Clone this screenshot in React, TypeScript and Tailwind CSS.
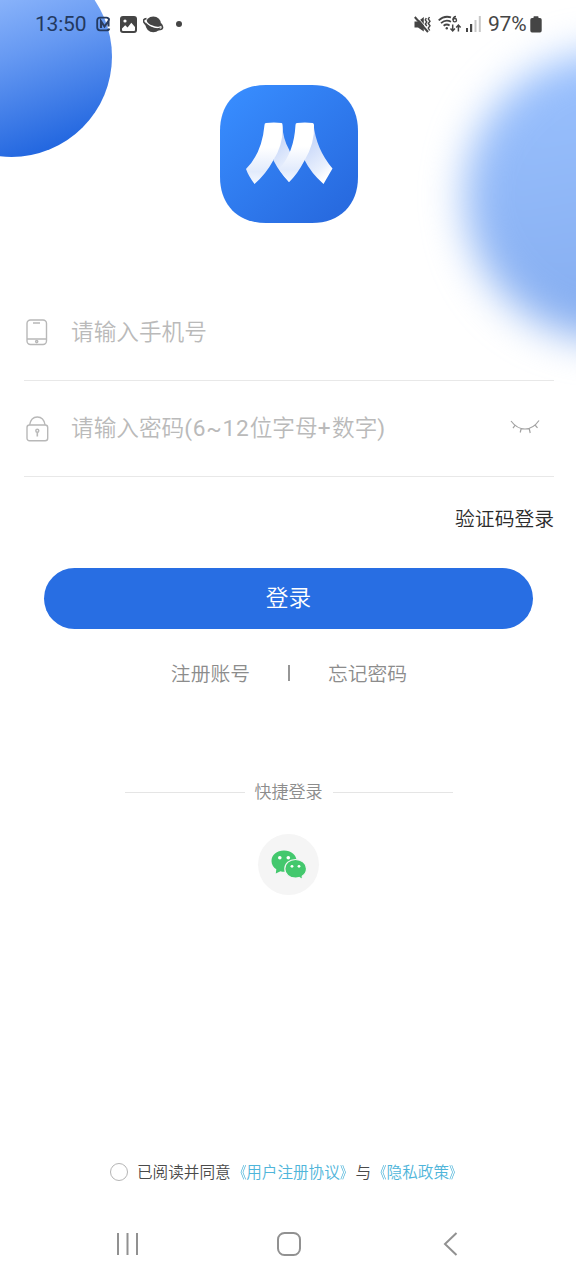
import { ReactNode, useState } from 'react';

const StatusBar = () => (
  <header className="relative flex h-12 items-center justify-between pl-[35px] pr-[34px] text-[#454545]">
    <div className="flex items-center">
      <span className="w-[52px] whitespace-nowrap text-[21px] leading-6 tracking-[-0.2px] text-[#23395f]">13:50</span>
      {/* Notification icons */}
      <svg className="ml-[9px]" width="15" height="16" viewBox="0 0 15 16" fill="none">
        <path d="M13 4.500Q13 1.700 10.500 1.700H4Q1.200 1.700 1.200 4.400V11.600Q1.200 14.300 4 14.300H10.500Q13 14.300 13.300 12.500" stroke="#23395f" strokeWidth="1.8" />
        <path d="M5 12V5.200L8.500 10.500L12.500 5V10.500" stroke="#2a3c5f" strokeWidth="2.1" />
      </svg>
      <svg className="ml-[9px]" width="17" height="17" viewBox="0 0 17 17">
        <rect width="17" height="17" rx="3" fill="currentColor" />
        <circle cx="5" cy="5" r="1.6" fill="#fff" />
        <path d="M2 12.6L5.2 9.2L7.6 11.5L11.3 6.7L15 11V14Q15 15 14 15H3Q2 15 2 14Z" fill="#fff" />
      </svg>
      <svg className="ml-[6px]" width="21" height="17" viewBox="0 0 21 17">
        <circle cx="10.300" cy="8.300" r="7.900" fill="currentColor" />
        <path d="M3.200 4.300Q2.500 7 8 9.800Q14.500 12.800 17.800 10.500" fill="none" stroke="#fff" strokeWidth="1.500" />
        <path d="M3.500 2.700Q-.5 3 .9 6.200Q2.800 9.600 8.500 12.200Q15.500 14.600 18.800 12.900Q20.600 11.200 17.800 7.900" fill="none" stroke="currentColor" strokeWidth="1.700" />
      </svg>
      <span className="ml-[12px] size-[6px] rounded-full bg-[#454545]" />
    </div>

    <div className="flex items-center">
      <svg width="17" height="17" viewBox="0 0 17 17">
        <path d="M0.500 5.500H4L9.800 1V15.500L4 11.500H0.500Z" fill="currentColor" />
        <path d="M2.300 0L15 14.500" stroke="#fff" strokeWidth="1" />
        <path d="M.8 1L14 16" stroke="currentColor" strokeWidth="2" />
        <path d="M12.300 2L11.300 4L12.800 6L11.300 8L12.800 10M15.500 1L14.300 3L16 5.200L14.300 7.500L16 9.800L14.300 12L15.700 14.500" stroke="currentColor" strokeWidth="1.4" fill="none" />
      </svg>
      <svg className="ml-[7px]" width="24" height="18" viewBox="0 0 24 18" fill="none" stroke="currentColor" strokeWidth="1.8">
        <path d="M.7 5.400Q6.200 .2 13 2.400M3 8.200Q7.700 4 13 6.800M5.600 10.800Q8.600 8.400 11.600 10.500" />
        <circle cx="8.800" cy="13.200" r="1.200" fill="currentColor" stroke="none" />
        <path d="M18 1.400Q15 1.600 15 5" strokeWidth="1.5" />
        <circle cx="16.800" cy="5.200" r="1.700" strokeWidth="1.400" />
        <path d="M14.700 9.500V16M12.500 13.600L14.700 16L16.900 13.600M20.400 16.500V10M18.200 12.400L20.400 10L22.600 12.400" strokeWidth="1.5" />
      </svg>
      <svg className="ml-[4px]" width="16" height="17" viewBox="0 0 16 17" fill="currentColor">
        <rect x="0" y="12" width="2" height="4" />
        <rect x="4" y="8" width="2.200" height="8" />
        <rect x="8.500" y="4" width="2" height="12" opacity=".3" />
        <rect x="12.800" y="0" width="2" height="16" opacity=".3" />
      </svg>
      <span className="ml-[6px] w-[41px] whitespace-nowrap text-[21px] leading-6 tracking-[-0.2px]">97%</span>
      <svg className="ml-[1px]" width="12" height="17" viewBox="0 0 12 17" fill="currentColor">
        <path d="M3.500 2V1Q3.500 .3 4.200 .3H7.800Q8.500 .3 8.500 1V2H10Q11.700 2 11.700 3.700V14.600Q11.700 16.500 10 16.500H2Q.3 16.500 .3 14.600V3.700Q.3 2 2 2Z" />
      </svg>
    </div>
  </header>
);

const Logo = () => (
  <svg width="138" height="138" viewBox="0 0 138 138">
    <defs>
      <linearGradient id="logoBg" x1="0.1" y1="0.1" x2="0.85" y2="0.9">
        <stop offset="0" stopColor="#378bfd" />
        <stop offset="1" stopColor="#286be0" />
      </linearGradient>
      <linearGradient id="fold" x1="0.1" y1="0" x2="0.5" y2="1">
        <stop offset="0.2" stopColor="#c3d4f8" />
        <stop offset="0.8" stopColor="#e9f0fd" />
        <stop offset="1" stopColor="#ffffff" />
      </linearGradient>
      <linearGradient id="ribbon" x1="0" y1="0" x2="0" y2="1">
        <stop offset="0.4" stopColor="#ffffff" />
        <stop offset="0.8" stopColor="#e2ebfc" />
        <stop offset="1" stopColor="#f4f8ff" />
      </linearGradient>
    </defs>
    <path d="M0 46C0 18 18 0 46 0H92C120 0 138 18 138 46V92C138 120 120 138 92 138H46C18 138 0 120 0 92Z" fill="url(#logoBg)" />
    <path d="M62 39Q63 54 69 64.500L76 82Q75 91 69 97Q60 88 53.500 75.500L56 64Z" fill="url(#fold)" />
    <path d="M93.500 39Q96 64 112.500 83.500L103.500 99Q91 88 84.500 75L87 62Z" fill="url(#fold)" />
    <path d="M46 38Q54 37 61.500 38Q62.500 38.200 62.500 40Q64 58 53.500 75Q46 89 34.500 99Q28.500 91 26 84Q42 68 44.500 40Q44.500 38.200 46 38Z" fill="url(#ribbon)" />
    <path d="M77 38Q85 37 92.500 38Q93.800 38.200 94 40Q95 58 84.500 75.500Q77 90 69 97Q63 90 59 84Q74 68 75.500 40Q75.500 38.200 77 38Z" fill="url(#ribbon)" />
  </svg>
);

const PhoneIcon = () => (
  <svg width="22" height="27" viewBox="0 0 22 27" fill="none" stroke="#b8b8b8" strokeWidth="1.4">
    <rect x="1" y="1" width="19.500" height="24.500" rx="3.500" />
    <path d="M1 20H20.500M7 4H14" />
    <circle cx="10.700" cy="22.600" r="1.100" />
  </svg>
);

const LockIcon = () => (
  <svg width="23" height="26" viewBox="0 0 23 26" fill="none" stroke="#b8b8b8" strokeWidth="1.4">
    <rect x="1" y="9" width="20.700" height="15.800" rx="2.500" />
    <path d="M3.600 9C4.500 3.500 7.500 1 11.300 1S18.200 3.500 19.100 9" />
    <circle cx="11.300" cy="14.700" r="1.500" />
    <path d="M11.300 16.300V20.500" strokeWidth="1.600" />
  </svg>
);

const ClosedEyeIcon = () => (
  <svg width="30" height="16" viewBox="0 0 30 16" fill="none" stroke="#a2a2a2" strokeWidth="1.2">
    <path d="M1 2Q7 10 15 10Q23 10 29 1.500M5.200 6L3 9.200M11.200 9.500L10.200 13.500M19.200 9.500L20.200 14M25 6L27.500 8.800" />
  </svg>
);

const WechatIcon = () => (
  <svg width="36" height="30" viewBox="0 0 36 30">
    <path d="M13 0.500C5.800 .5 .5 5 .5 11C.5 14.700 2.400 17.500 5.300 19.300L4.800 23.500L9.500 21.300Q11.200 21.800 13 21.800C20 21.800 25.500 17.200 25.500 11S20 .5 13 .5Z" fill="#43c86d" />
    <path d="M24.500 9.500C18.300 9.500 13.800 13.500 13.800 18.700C13.800 24 18.300 28 24.500 28Q26.400 28 28 27.500L31.500 29.500L31.200 26.300C34 24.300 35.500 21.700 35.500 18.700C35.500 13.500 30.700 9.500 24.500 9.500Z" fill="#43c86d" stroke="#f5f5f5" strokeWidth="1.200" />
    <g fill="#fff">
      <circle cx="8.800" cy="7.800" r="1.800" />
      <circle cx="17.300" cy="7.800" r="1.800" />
      <circle cx="21" cy="16.300" r="1.400" />
      <circle cx="28" cy="16.300" r="1.400" />
    </g>
  </svg>
);

interface FieldProps {
  icon: ReactNode;
  label: ReactNode;
  children?: ReactNode;
}

const Field = ({ icon, label, children }: FieldProps) => (
  <div className="flex h-24 items-center border-b border-[#e8e8e8] pl-[2px] pr-[14px]">
    <span className="w-[45px]">{icon}</span>
    <span className="flex-1 whitespace-nowrap text-[22.67px] font-[350] leading-8 text-[#bababa]">{label}</span>
    {children}
  </div>
);

const PolicyLink = ({ children }: { children: ReactNode }) => (
  <a className="text-[#4fb5da]">
    <span className="inline-block origin-right scale-x-[0.8]">《</span>
    {children}
    <span className="inline-block origin-left scale-x-[0.8]">》</span>
  </a>
);

const App = () => {
  const [agreed, setAgreed] = useState(false);

  return (
    <div className="relative flex h-[1280px] w-[576px] flex-col overflow-hidden bg-white font-[Roboto,'Noto_Sans_CJK_SC',sans-serif]">
      {/* Background decoration */}
      <div className="absolute -left-[89px] -top-[44px] size-[201px] rounded-full bg-[linear-gradient(160deg,#9cc1ff_15%,#6699f2_50%,#2468e0_88%)]" />
      <div className="absolute left-[465px] top-[52px] size-[288px] rounded-full bg-[linear-gradient(170deg,#9bc2ff,#83abee)] blur-[20px]" />

      <StatusBar />

      <main className="relative flex flex-1 flex-col">
        <div className="mt-[37px] flex justify-center pl-[2px]">
          <Logo />
        </div>

        <form className="ml-6 mr-[22px] mt-[62px]">
          <Field icon={<PhoneIcon />} label="请输入手机号" />
          <Field
            icon={<LockIcon />}
            label={
              <span className="block pt-px">
                请输入密码<span className="font-normal tracking-[0.8px]">(6~12</span>位字母
                <span className="font-normal tracking-[1.5px]">+</span>数字<span className="font-normal">)</span>
              </span>
            }
          >
            <button type="button" className="mb-1">
              <ClosedEyeIcon />
            </button>
          </Field>
          <div className="mt-[27px] flex justify-end">
            <button type="button" className="text-[19.8px] font-[350] leading-8 text-[#2b2b2b]">验证码登录</button>
          </div>
          <button type="button" className="ml-5 mt-8 flex h-[61px] w-[489px] items-center justify-center rounded-full bg-[#286ee3] pt-px text-[22.67px] font-[350] text-white">
            登录
          </button>
        </form>

        <div className="mt-[30px] flex items-center justify-center pl-[2px] text-[19.8px] font-[350] leading-8 text-[#8c8c8c]">
          <a>注册账号</a>
          <span className="mx-[38px] mb-[4px] h-4 w-[2px] bg-[#969696]" />
          <a>忘记密码</a>
        </div>

        {/* Quick login */}
        <div className="mt-[89px] flex items-center justify-center gap-[10px] pl-[1px] text-[17px] font-[350] leading-6 text-[#8c8c8c]">
          <span className="h-px w-[120px] bg-[#e5e5e5]" />
          <span>快捷登录</span>
          <span className="h-px w-[120px] bg-[#e5e5e5]" />
        </div>
        <button className="ml-[258px] mt-[30px] flex size-[61px] items-center justify-center rounded-full bg-[#f5f5f5]">
          <WechatIcon />
        </button>

        <div className="mb-[24px] ml-[110px] mt-auto flex items-center whitespace-nowrap text-[15.6px] font-[350] leading-6 text-[#4a4a4a]">
          <button
            onClick={() => setAgreed(!agreed)}
            className={agreed ? 'mr-[9px] size-[18px] rounded-full border border-[#286ee3] bg-[#286ee3]' : 'mr-[9px] size-[18px] rounded-full border border-[#b5b5b5]'}
          />
          <p className="-mb-px mt-px flex">
            <span>已阅读并同意</span>
            <PolicyLink>用户注册协议</PolicyLink>
            <span>与</span>
            <PolicyLink>隐私政策</PolicyLink>
          </p>
        </div>
      </main>

      {/* System navigation */}
      <nav className="flex h-[72px] items-center justify-between pl-[116px] pr-[118px]">
        <svg width="23" height="24" viewBox="0 0 23 24" stroke="#919191" strokeWidth="2">
          <path d="M2 1V23M11.500 1V23M21 1V23" />
        </svg>
        <svg className="mr-[5px]" width="24" height="24" viewBox="0 0 24 24" fill="none" stroke="#919191" strokeWidth="2">
          <rect x="1" y="1" width="22" height="22" rx="6.500" />
        </svg>
        <svg width="15" height="24" viewBox="0 0 15 24" fill="none" stroke="#919191" strokeWidth="2">
          <path d="M13.500 1L2 12L13.500 23" />
        </svg>
      </nav>
    </div>
  );
};

export default App;
